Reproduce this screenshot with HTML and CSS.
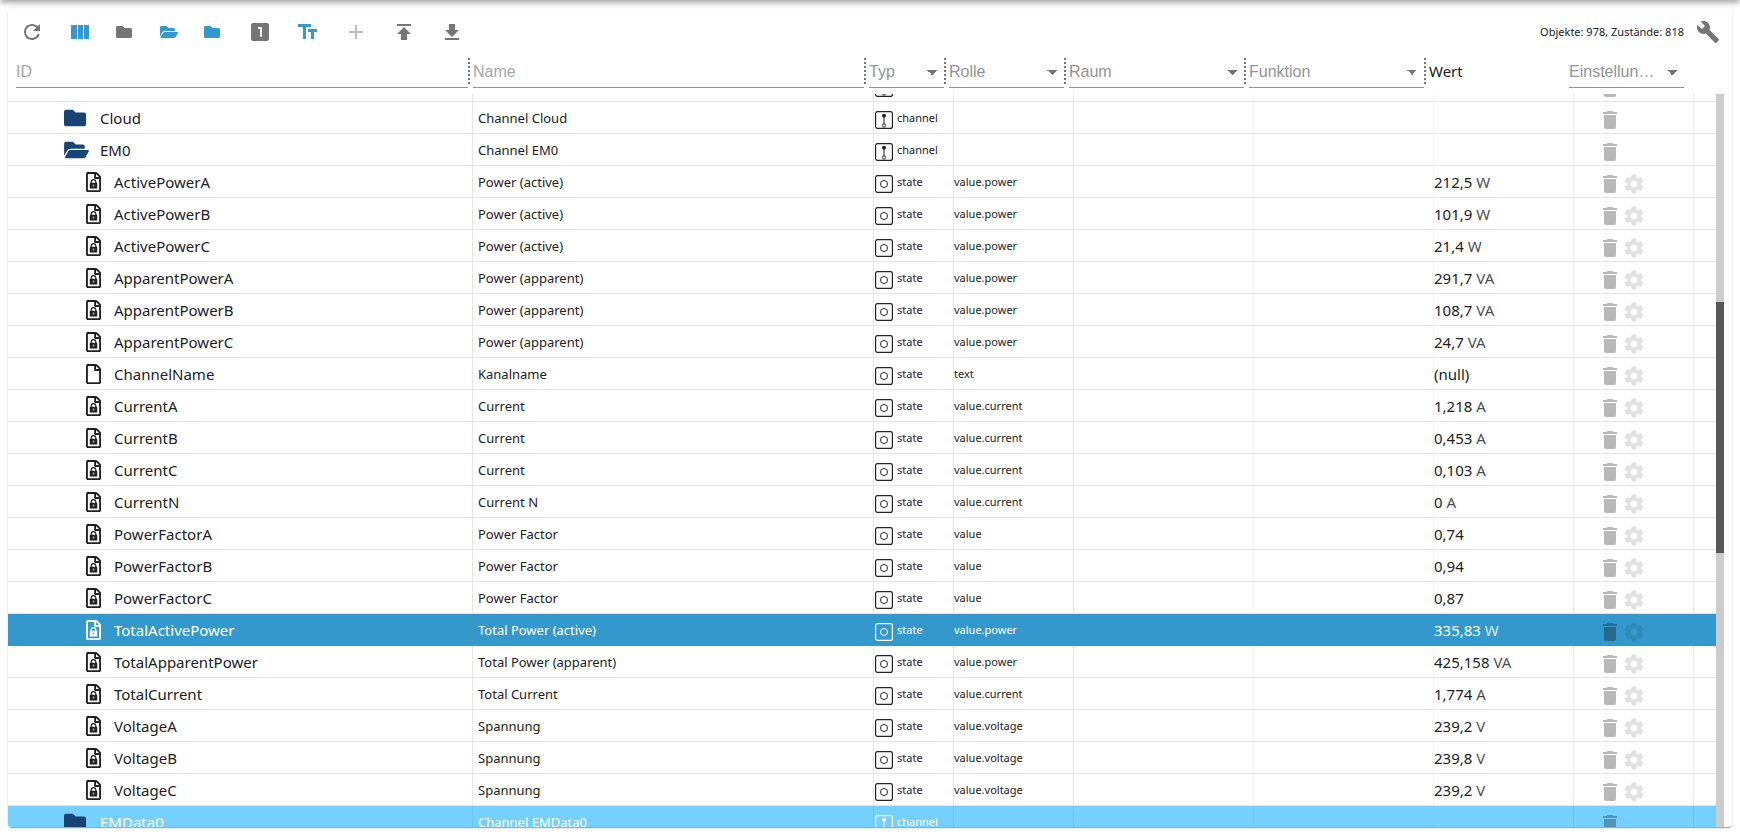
FILE: index.html
```html
<!DOCTYPE html>
<html lang="de">
<head>
<meta charset="utf-8">
<title>Objekte</title>
<link rel="stylesheet" href="styles.css">
</head>
<body>
<svg class="defs" aria-hidden="true">
  <symbol id="folder" viewBox="0 0 512 512"><path d="M464 128H272l-64-64H48C21.490 64 0 85.490 0 112v288c0 26.510 21.490 48 48 48h416c26.510 0 48-21.490 48-48V176c0-26.510-21.490-48-48-48z"/></symbol>
  <symbol id="folder-open" viewBox="0 0 576 512"><path d="M572.694 292.093L500.270 416.248A63.997 63.997 0 0 1 444.989 448H45.025c-18.523 0-30.064-20.093-20.731-36.093l72.424-124.155A64 64 0 0 1 152 256h399.964c18.523 0 30.064 20.093 20.730 36.093zM152 224h328v-48c0-26.510-21.490-48-48-48H272l-64-64H48C21.490 64 0 85.490 0 112v278.046l69.077-118.418C86.214 242.250 117.989 224 152 224z"/></symbol>
  <symbol id="file" viewBox="0 0 384 512"><path d="M369.900 97.900L286 14C277 5 264.800-.1 252.100-.1H48C21.500 0 0 21.500 0 48v416c0 26.500 21.500 48 48 48h288c26.500 0 48-21.500 48-48V131.900c0-12.700-5.100-25-14.100-34zM256 51.900l76.100 76.100H256zM336 464H48V48h160v104c0 13.300 10.700 24 24 24h104z"/></symbol>
  <symbol id="file-lock" viewBox="0 0 384 512"><use href="#file"/><path fill-rule="evenodd" d="M96 274h22v-22a74 74 0 0 1 148 0v22h22v148H96zM148 274h88v-22a44 44 0 0 0-88 0zM174 325v42h36v-42z"/></symbol>
  <symbol id="state" viewBox="0 0 18 18"><rect x=".6" y=".6" width="16.800" height="16.800" rx="2" fill="none" stroke="currentColor" stroke-width="1.200"/><circle cx="9" cy="9" r="3.500" fill="none" stroke="currentColor"/></symbol>
  <symbol id="channel" viewBox="0 0 18 18"><rect x=".6" y=".6" width="16.800" height="16.800" rx="2" fill="none" stroke="currentColor" stroke-width="1.200"/><circle cx="9" cy="4.700" r="2"/><path d="M8.500 5h1v8h-1z"/><circle cx="9" cy="14.500" r="1.600" fill="none" stroke="currentColor"/></symbol>
  <symbol id="trash" viewBox="0 0 24 24"><path d="M6 19c0 1.100.9 2 2 2h8c1.100 0 2-.9 2-2V7H6v12zM19 4h-3.500l-1-1h-5l-1 1H5v2h14V4z"/></symbol>
  <symbol id="gear" viewBox="0 0 24 24"><path d="M19.140 12.940c.04-.3.06-.61.06-.94 0-.32-.02-.64-.07-.94l2.030-1.580c.18-.14.23-.41.12-.61l-1.920-3.320c-.12-.22-.37-.29-.59-.22l-2.390.96c-.5-.38-1.030-.7-1.620-.94l-.36-2.540c-.04-.24-.24-.41-.48-.41h-3.840c-.24 0-.43.17-.47.41l-.36 2.540c-.59.24-1.130.57-1.620.94l-2.390-.96c-.22-.08-.47 0-.59.22L2.740 8.870c-.12.21-.08.47.12.61l2.030 1.580c-.05.3-.09.63-.09.94s.02.64.07.94l-2.030 1.580c-.18.14-.23.41-.12.61l1.920 3.320c.12.22.37.29.59.22l2.390-.96c.5.38 1.030.7 1.620.94l.36 2.540c.05.24.24.41.48.41h3.840c.24 0 .44-.17.47-.41l.36-2.540c.59-.24 1.130-.56 1.620-.94l2.390.96c.22.08.47 0 .59-.22l1.920-3.320c.12-.22.07-.47-.12-.61l-2.010-1.580zM12 15.600c-1.980 0-3.600-1.620-3.600-3.600s1.620-3.600 3.600-3.600 3.600 1.620 3.600 3.600-1.620 3.600-3.600 3.600z"/></symbol>
</svg>
<div class="appbar"></div>
<main class="card">
  <div class="toolbar">
    <button class="tool" aria-label="Aktualisieren"><svg viewBox="0 0 24 24"><path d="M17.650 6.350C16.200 4.900 14.210 4 12 4c-4.420 0-7.990 3.580-7.990 8s3.570 8 7.990 8c3.730 0 6.840-2.550 7.730-6h-2.080c-.82 2.330-3.040 4-5.650 4-3.310 0-6-2.690-6-6s2.690-6 6-6c1.660 0 3.140.69 4.220 1.780L13 11h7V4l-2.350 2.350z"/></svg></button>
    <button class="tool tool-active" aria-label="Spalten"><svg viewBox="0 0 24 24"><path d="M10 19h5V5h-5zM3 19h6V5H3zM16 5v14h5V5z"/></svg></button>
    <button class="tool tool-small" aria-label="Alle zuklappen"><svg><use href="#folder"/></svg></button>
    <button class="tool tool-small tool-active" aria-label="Alle aufklappen"><svg class="wide"><use href="#folder-open"/></svg></button>
    <button class="tool tool-small tool-active" aria-label="Eine Ebene zuklappen"><svg><use href="#folder"/></svg></button>
    <button class="tool" aria-label="Ebene 1"><svg viewBox="0 0 24 24"><path d="M19 3H5c-1.100 0-2 .9-2 2v14c0 1.100.9 2 2 2h14c1.100 0 2-.9 2-2V5c0-1.100-.9-2-2-2zm-5 14h-2V9h-2V7h4v10z"/></svg></button>
    <button class="tool tool-active" aria-label="Namen zeigen"><svg viewBox="0 0 24 24"><path d="M2 4v3h5v12h3V7h5V4H2zm19 5h-9v3h3v7h3v-7h3V9z"/></svg></button>
    <button class="tool tool-off" aria-label="Hinzufügen"><svg viewBox="0 0 24 24"><path d="M19 13h-6v6h-2v-6H5v-2h6V5h2v6h6v2z"/></svg></button>
    <button class="tool" aria-label="Hochladen"><svg viewBox="0 0 24 24"><path d="M5 4v2h14V4H5zm0 10h4v6h6v-6h4l-7-7-7 7z"/></svg></button>
    <button class="tool" aria-label="Herunterladen"><svg viewBox="0 0 24 24"><path d="M19 10h-4V4H9v6H5l7 7 7-7zM5 18v2h14v-2H5z"/></svg></button>
    <span class="summary">Objekte: 978, Zustände: 818</span>
    <button class="tool" aria-label="Anpassen"><svg viewBox="0 0 24 24"><path d="M22.700 19l-9.100-9.100c.9-2.300.4-5-1.500-6.900-2-2-5-2.400-7.400-1.300L9 6 6 9 1.600 4.700C.4 7.100.9 10.100 2.900 12.100c1.900 1.900 4.600 2.400 6.900 1.500l9.100 9.100c.4.4 1 .4 1.400 0l2.300-2.300c.5-.4.5-1.100.1-1.400z"/></svg></button>
  </div>
  <div class="filters">
    <div class="filter"><input class="field" placeholder="ID" aria-label="ID"><i class="grip"></i></div>
    <div class="filter"><input class="field" placeholder="Name" aria-label="Name"><i class="grip"></i></div>
    <div class="filter"><select class="field" aria-label="Typ"><option>Typ</option></select><i class="grip"></i></div>
    <div class="filter"><select class="field" aria-label="Rolle"><option>Rolle</option></select><i class="grip"></i></div>
    <div class="filter"><select class="field" aria-label="Raum"><option>Raum</option></select><i class="grip"></i></div>
    <div class="filter"><select class="field" aria-label="Funktion"><option>Funktion</option></select><i class="grip"></i></div>
    <div class="filter"><span class="value-title">Wert</span></div>
    <div class="filter"><select class="field" aria-label="Einstellungen"><option>Einstellungen</option></select></div>
  </div>
  <div class="view">
    <div class="rows">
      <table class="objects">
        <colgroup><col class="c-id"><col><col class="c-type"><col class="c-role"><col class="c-room"><col class="c-room"><col class="c-value"><col class="c-role"><col class="c-end"></colgroup>
        <tbody id="body"></tbody>
      </table>
    </div>
    <div class="track"><div class="thumb"></div></div>
  </div>
</main>
<script src="app.js"></script>
</body>
</html>
```
FILE: styles.css
```css
* { box-sizing: border-box; }
body {
  margin: 0;
  height: 100vh;
  padding: 8px;
  background: #fff;
  color: #212121;
  font: 15px/24px "Segoe UI", "Noto Sans", sans-serif;
  overflow: hidden;
}
.defs { display: none; }
.appbar {
  position: absolute;
  inset: -10px 0 auto 0;
  height: 10px;
  box-shadow: 0 2px 4px -1px rgba(0,0,0,.2), 0 4px 5px 0 rgba(0,0,0,.14), 0 1px 10px 0 rgba(0,0,0,.12);
}
svg { display: block; fill: currentColor; }
.card {
  height: calc(100vh - 16px);
  display: flex;
  flex-direction: column;
  background: #fff;
  border-radius: 4px;
  overflow: hidden;
  box-shadow: 0 2px 1px -1px rgba(0,0,0,.2), 0 1px 1px 0 rgba(0,0,0,.14), 0 1px 3px 0 rgba(0,0,0,.12);
}
.toolbar { display: flex; align-items: center; height: 48px; flex: none; }
.tool {
  width: 48px;
  height: 48px;
  padding: 12px;
  border: 0;
  background: none;
  color: #757575;
}
.tool svg { width: 24px; height: 24px; }
.tool-small { width: 44px; }
.tool-small svg { width: 16px; height: 16px; }
.tool-small .wide { width: 18px; }
.tool-active { color: #3399cc; }
.tool-off { color: #bdbdbd; }
.summary { margin-left: auto; font-size: 11px; }

.filters {
  display: grid;
  grid-template-columns: 465px 1fr 80px 120px 180px 180px 140px 115px;
  padding-right: 48px;
  height: 38px;
  flex: none;
}
.filter { display: flex; padding-right: 3px; align-items: flex-start; }
.filter:first-child { padding-left: 8px; }
.filter:last-child { padding-right: 0; }
.field {
  flex: 1;
  min-width: 0;
  height: 32px;
  padding: 0;
  border: 0;
  border-bottom: 1px solid #949494;
  border-radius: 0;
  background: none;
  color: #939393;
  font: 16px/24px "Liberation Sans", Arial, sans-serif;
  appearance: none;
}
.field::placeholder { color: #a6a6a6; opacity: 1; }
select.field {
  padding-right: 28px;
  text-overflow: ellipsis;
  background: conic-gradient(from -45deg at 50% 100%, #757575 90deg, transparent 0) right 7px top 14px / 10px 5px no-repeat;
}
.grip {
  width: 2px;
  height: 26px;
  margin-top: 2px;
  background: repeating-linear-gradient(#757575 0 2px, transparent 2px 4px);
}
.value-title { line-height: 30px; }

.view { flex: 1; min-height: 0; display: flex; padding-right: 8px; }
.rows { flex: 1; min-width: 0; overflow: hidden; }
.objects {
  width: 100%;
  margin-top: -24px;
  table-layout: fixed;
  border-collapse: separate;
  border-spacing: 0;
}
.c-id { width: 465px; }
.c-type { width: 80px; }
.c-role { width: 120px; }
.c-room { width: 180px; }
.c-value { width: 140px; }
.c-end { width: 22px; }
td {
  height: 32px;
  padding: 0;
  border-right: 1px solid rgba(128,128,128,.2);
  border-bottom: 1px solid #e5e5e5;
  white-space: nowrap;
  overflow: hidden;
}
td:nth-child(5), td:nth-child(6) { border-right-color: rgba(128,128,128,.08); }
td:last-child { border-right: 0; }
.cell { display: flex; align-items: center; height: 31px; padding-top: 1px; }
.id { padding-left: 56px; gap: 11px; }
.id svg { width: 25px; height: 22px; color: #174475; }
.id .closed { width: 22px; margin-right: 3px; }
.leaf { padding-left: 78px; gap: 13px; }
.leaf svg { width: 15px; height: 20px; color: #212121; }
.name { padding-left: 5px; font-size: 13px; }
.type { padding: 5px 0 0 1px; gap: 4px; font-size: 11px; }
.type svg { width: 18px; height: 18px; }
.type span { padding-bottom: 4px; }
.role { font-size: 11px; }
.unit { opacity: .8; }
.actions { padding: 5px 0 0 24px; }
.actions button { width: 24px; height: 24px; padding: 0; border: 0; background: none; color: #b8b8b8; }
.actions button:disabled { color: #e1e1e1; }
.actions svg { width: 24px; height: 24px; }
.selected td { background-color: #3399cc; color: #fff; border-bottom-color: #3399cc; }
.selected .leaf svg { color: #fff; }
.selected .actions button { color: #246b8f; }
.selected .actions button:disabled { color: #2e8ab8; }
.hovered td { background-color: #75d0ff; color: #fff; border-bottom-color: #75d0ff; }
.hovered .actions button { color: #5292b3; }
.track { width: 8px; padding-top: 208px; background: #ccc; }
.thumb { height: 251px; background: #575757; }
```
FILE: app.js
```javascript
const objects = [
  ["none", "", ""],
  ["closed", "Cloud", "Channel Cloud"],
  ["open", "EM0", "Channel EM0"],
  ["lock", "ActivePowerA", "Power (active)", "value.power", "212,5", "W"],
  ["lock", "ActivePowerB", "Power (active)", "value.power", "101,9", "W"],
  ["lock", "ActivePowerC", "Power (active)", "value.power", "21,4", "W"],
  ["lock", "ApparentPowerA", "Power (apparent)", "value.power", "291,7", "VA"],
  ["lock", "ApparentPowerB", "Power (apparent)", "value.power", "108,7", "VA"],
  ["lock", "ApparentPowerC", "Power (apparent)", "value.power", "24,7", "VA"],
  ["file", "ChannelName", "Kanalname", "text", "(null)", ""],
  ["lock", "CurrentA", "Current", "value.current", "1,218", "A"],
  ["lock", "CurrentB", "Current", "value.current", "0,453", "A"],
  ["lock", "CurrentC", "Current", "value.current", "0,103", "A"],
  ["lock", "CurrentN", "Current N", "value.current", "0", "A"],
  ["lock", "PowerFactorA", "Power Factor", "value", "0,74", ""],
  ["lock", "PowerFactorB", "Power Factor", "value", "0,94", ""],
  ["lock", "PowerFactorC", "Power Factor", "value", "0,87", ""],
  ["lock", "TotalActivePower", "Total Power (active)", "value.power", "335,83", "W", "selected"],
  ["lock", "TotalApparentPower", "Total Power (apparent)", "value.power", "425,158", "VA"],
  ["lock", "TotalCurrent", "Total Current", "value.current", "1,774", "A"],
  ["lock", "VoltageA", "Spannung", "value.voltage", "239,2", "V"],
  ["lock", "VoltageB", "Spannung", "value.voltage", "239,8", "V"],
  ["lock", "VoltageC", "Spannung", "value.voltage", "239,2", "V"],
  ["closed", "EMData0", "Channel EMData0", "", "", "", "hovered"]
];
const symbols = { closed: "folder", open: "folder-open", lock: "file-lock", file: "file" };
const icon = (name, cls = "") => `<svg class="${cls}"><use href="#${name}"/></svg>`;

document.getElementById("body").innerHTML = objects.map(([kind, id, name, role = "", value = "", unit = "", state = ""]) => {
  const leaf = kind === "lock" || kind === "file";
  const type = leaf ? "state" : "channel";
  return `<tr class="${state}">
    <td><div class="cell ${leaf ? "leaf" : "id"}">${id ? icon(symbols[kind], kind) : ""}<span>${id}</span></div></td>
    <td><div class="cell name">${name}</div></td>
    <td><div class="cell type">${icon(type)}<span>${id ? type : ""}</span></div></td>
    <td><div class="cell role">${role}</div></td>
    <td></td><td></td>
    <td><div class="cell"><span>${value} <span class="unit">${unit}</span></span></div></td>
    <td><div class="cell actions"><button aria-label="Löschen">${icon("trash")}</button>${leaf ? `<button disabled aria-label="Einstellungen">${icon("gear")}</button>` : ""}</div></td>
    <td></td></tr>`;
}).join("");
```
